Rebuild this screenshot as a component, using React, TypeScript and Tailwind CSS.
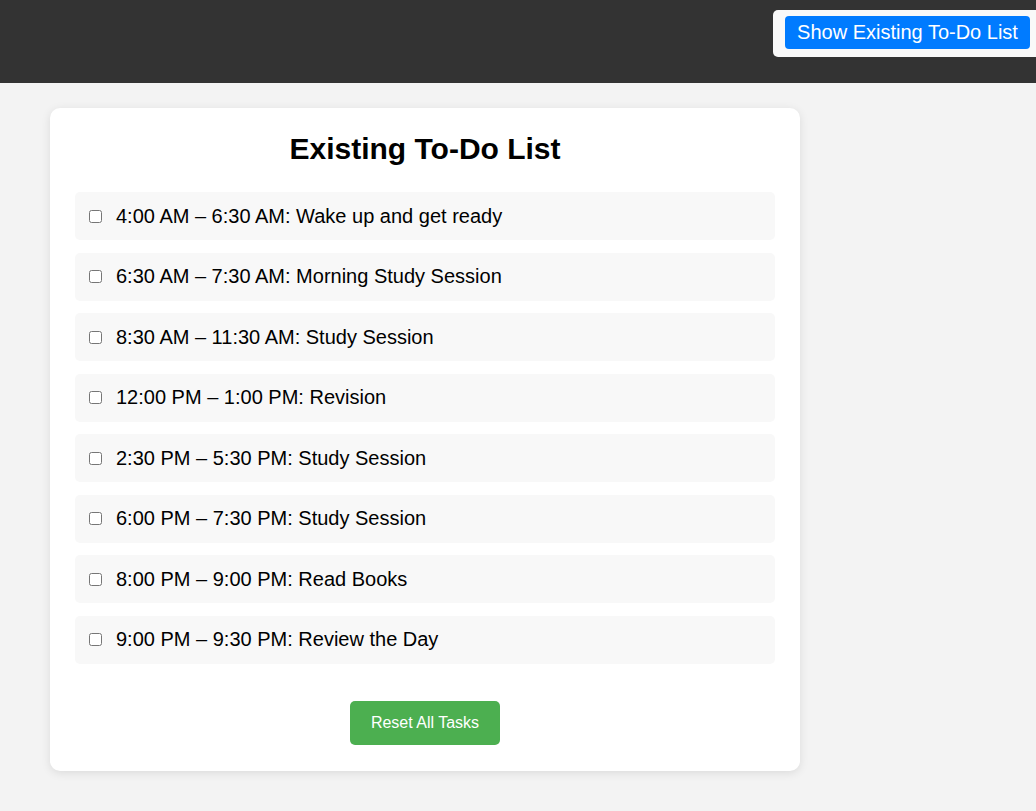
const TASKS = [
  "4:00 AM – 6:30 AM: Wake up and get ready",
  "6:30 AM – 7:30 AM: Morning Study Session",
  "8:30 AM – 11:30 AM: Study Session",
  "12:00 PM – 1:00 PM: Revision",
  "2:30 PM – 5:30 PM: Study Session",
  "6:00 PM – 7:30 PM: Study Session",
  "8:00 PM – 9:00 PM: Read Books",
  "9:00 PM – 9:30 PM: Review the Day",
];

export default function App() {
  return (
    <div className="min-h-[811px] bg-[#f3f3f3] font-['Liberation_Sans',Arial,sans-serif] text-black">
      <header className="flex h-[83px] justify-end bg-[#333333] pt-[10px]">
        <div className="h-[47px] rounded-l-[5px] bg-[#f9f9f9] py-[6px] pl-[12px] pr-[6px]">
          <button className="h-[33px] w-[245px] rounded-[4px] bg-[#007bff] text-[20px] leading-[23px] text-white">
            Show Existing To-Do List
          </button>
        </div>
      </header>
      <main className="px-[50px] pt-[25px]">
        <section className="w-[750px] rounded-[10px] bg-white px-[25px] pb-[26px] pt-[25px] shadow-[0_2px_10px_rgba(0,0,0,0.1)]">
          <h2 className="mb-[27px] text-center text-[30px] font-bold leading-[32px]">Existing To-Do List</h2>
          <ul className="flex flex-col gap-[12.5px]">
            {TASKS.map((t) => (
              <li key={t} className="flex h-[48px] items-center rounded-[5px] bg-[#f8f8f8] pl-[14px]">
                <input type="checkbox" className="m-0 mr-[14px] h-[13px] w-[13px]" />
                <span className="text-[20px] leading-[23px]">{t}</span>
              </li>
            ))}
          </ul>
          <div className="mt-[37px] flex justify-center">
            <button className="h-[44px] w-[150px] rounded-[5px] bg-[#4caf50] text-[16px] text-white">Reset All Tasks</button>
          </div>
        </section>
      </main>
    </div>
  );
}
